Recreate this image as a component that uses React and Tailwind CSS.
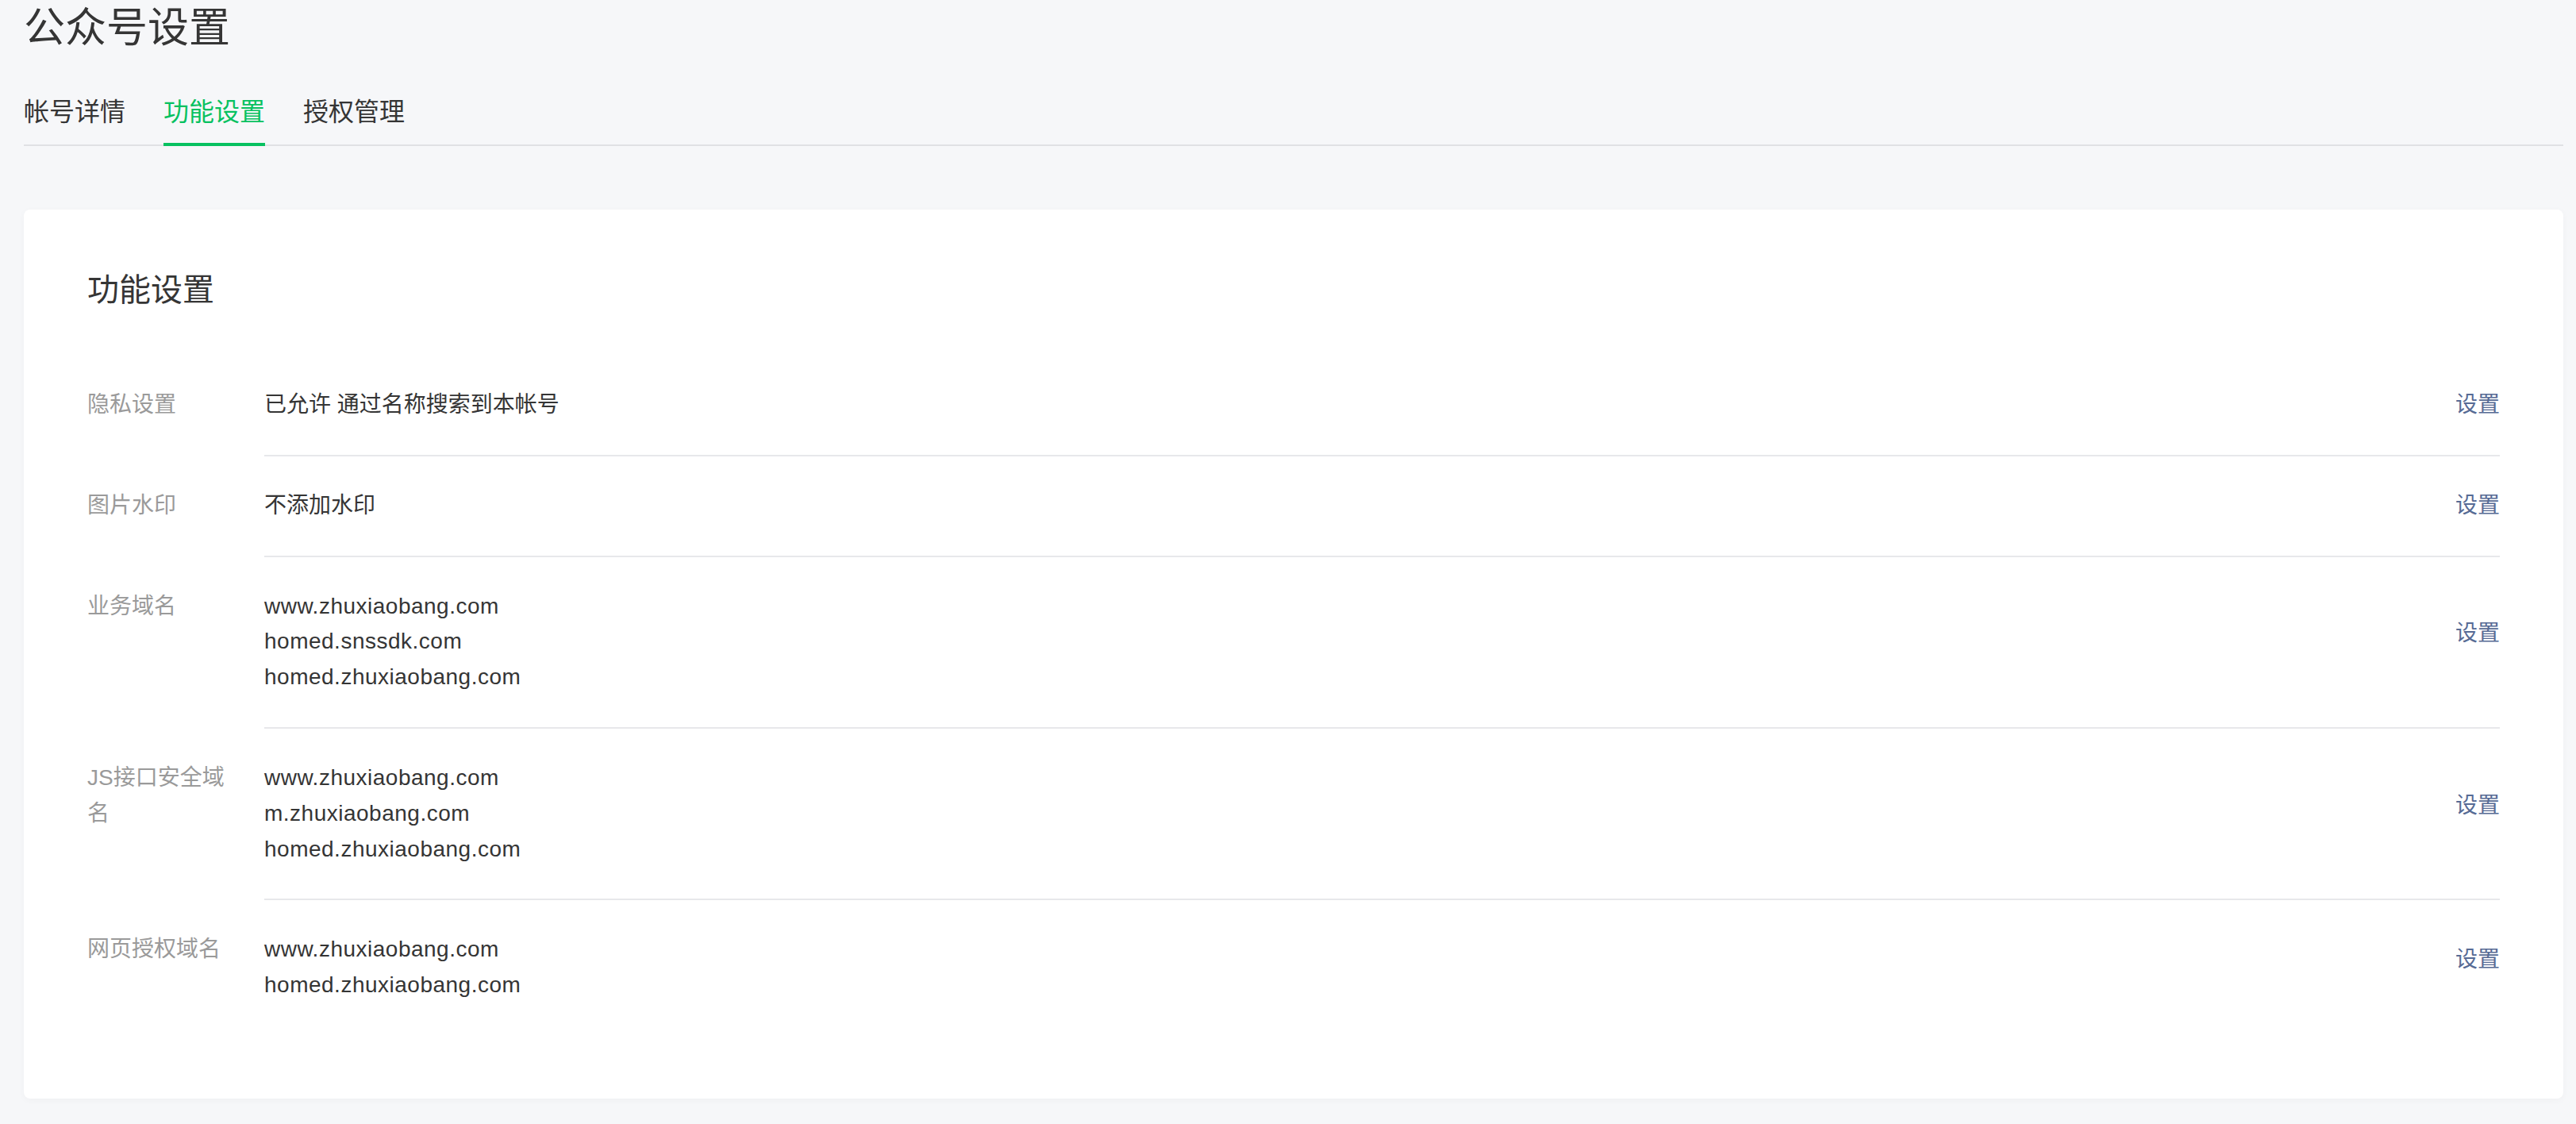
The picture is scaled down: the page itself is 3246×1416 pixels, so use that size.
import React from "react";

const rows = [
  { label: "隐私设置", values: ["已允许 通过名称搜索到本帐号"] },
  { label: "图片水印", values: ["不添加水印"] },
  {
    label: "业务域名",
    values: ["www.zhuxiaobang.com", "homed.snssdk.com", "homed.zhuxiaobang.com"],
  },
  {
    label: "JS接口安全域名",
    values: ["www.zhuxiaobang.com", "m.zhuxiaobang.com", "homed.zhuxiaobang.com"],
  },
  {
    label: "网页授权域名",
    values: ["www.zhuxiaobang.com", "homed.zhuxiaobang.com"],
  },
];

const tabs = ["帐号详情", "功能设置", "授权管理"];

const isLatin = (s) => /^[\x00-\x7f]+$/.test(s);

export default function App() {
  return (
    <div className="min-h-[1416px] w-full bg-[#f6f7f9] font-['Liberation_Sans','Noto_Sans_CJK_SC',sans-serif] text-[#353535]">
      <div className="ml-[30px] w-[3200px]">
        <h1 className="text-[52px] leading-[70px] font-normal text-[#353535]">公众号设置</h1>

        <div className="mt-[46px] flex gap-[48px] border-b-2 border-[#e0e1e4]">
          {tabs.map((t, i) => (
            <div
              key={t}
              className={
                i === 1
                  ? "-mb-[2px] border-b-4 border-[#07c160] pb-[13px] text-[32px] leading-[51px] text-[#07c160]"
                  : "-mb-[2px] border-b-4 border-transparent pb-[13px] text-[32px] leading-[51px] text-[#353535]"
              }
            >
              {t}
            </div>
          ))}
        </div>

        <div className="mt-[80px] rounded-[8px] bg-white px-[80px] pt-[80px] pb-[80px] shadow-[0_2px_10px_rgba(0,0,0,0.03)]">
          <h2 className="mb-[62px] text-[40px] leading-[42px] font-normal text-[#353535]">功能设置</h2>

          {rows.map((r, idx) => {
            const multi = r.values.length > 1;
            const last = idx === rows.length - 1;
            return (
              <div key={r.label} className="flex">
                <div className="w-[223px] shrink-0 pt-[40px] pr-[40px] text-[28px] leading-[1.6] text-[#9a9a9a]">
                  {r.label}
                </div>
                <div
                  className={
                    "flex flex-1 items-center justify-between " +
                    (multi ? "pt-[20px] pb-[40px] " : "py-[40px] ") +
                    (last ? "" : "border-b-2 border-[#e7e8eb]")
                  }
                >
                  <div className={multi ? "pt-[20px] text-[28px] leading-[1.6]" : "text-[28px] leading-[1.6]"}>
                    {r.values.map((v) => (
                      <div key={v} className={isLatin(v) ? "tracking-[0.5px]" : ""}>
                        {v}
                      </div>
                    ))}
                  </div>
                  <a className="cursor-pointer text-[28px] leading-[1.6] text-[#576b95]">设置</a>
                </div>
              </div>
            );
          })}
        </div>
      </div>
    </div>
  );
}
